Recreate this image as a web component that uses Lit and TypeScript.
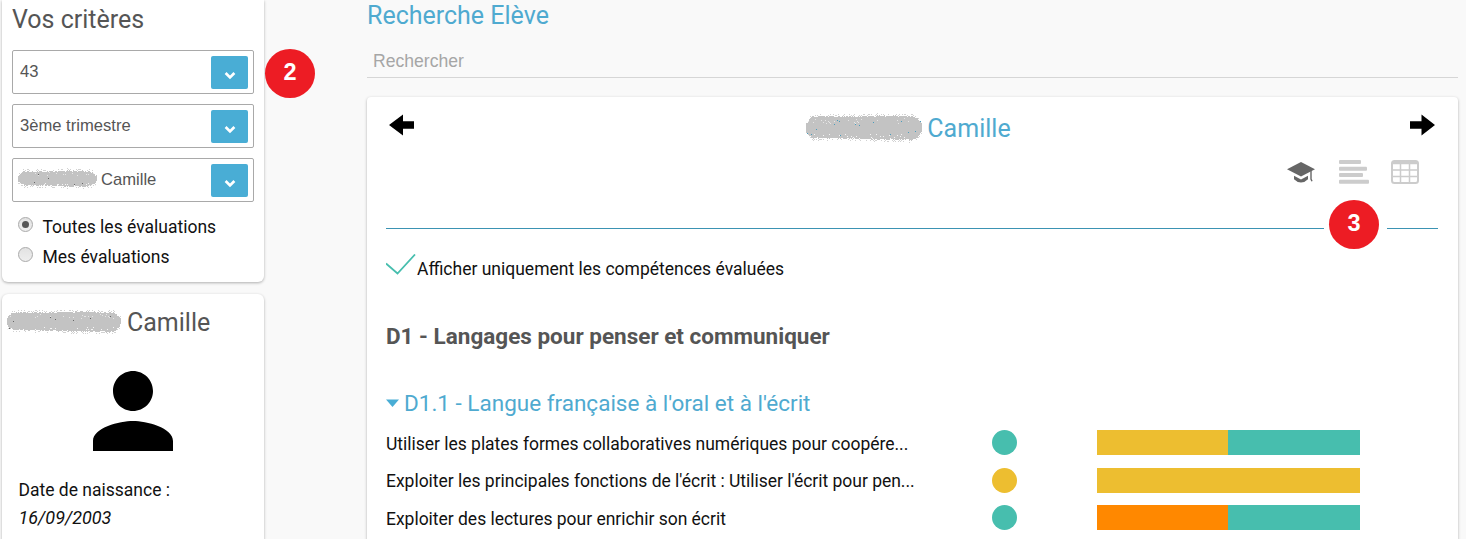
import { LitElement, html, css, svg } from "lit";
import { customElement, property } from "lit/decorators.js";

const TEAL = "#47beae";
const GOLD = "#edbe30";
const ORANGE = "#ff8800";

interface Skill {
  label: string;
  level: string;
  parts: { color: string; share: number }[];
}

const SKILLS: Skill[] = [
  {
    label: "Utiliser les plates formes collaboratives numériques pour coopére...",
    level: TEAL,
    parts: [{ color: GOLD, share: 49.8 }, { color: TEAL, share: 50.2 }],
  },
  {
    label: "Exploiter les principales fonctions de l'écrit : Utiliser l'écrit pour pen...",
    level: GOLD,
    parts: [{ color: GOLD, share: 100 }],
  },
  {
    label: "Exploiter des lectures pour enrichir son écrit",
    level: TEAL,
    parts: [{ color: ORANGE, share: 49.8 }, { color: TEAL, share: 50.2 }],
  },
];

// Grainy grey scribble that hides the family name.
@customElement("name-mask")
class NameMask extends LitElement {
  @property({ type: Number }) width = 80;
  @property({ type: Number }) height = 20;
  @property() ink = "#666";

  static styles = css`
    :host { display: block; flex: none; }
    svg { display: block; overflow: visible; }
  `;

  render() {
    const w = this.width;
    const h = this.height;
    let seed = w * 7 + h;
    const next = () => {
      seed = (seed * 16807) % 2147483647;
      return seed / 2147483647;
    };
    const dots: unknown[] = [];
    for (let x = 0; x < w; x += 1) {
      const endL = Math.max(0, 1 - x / 7);
      const endR = Math.max(0, 1 - (w - x) / 11);
      const wave = Math.sin((x / w) * 7) * 0.8;
      const top = 0.5 + wave * 0.5 + (endL * endL + endR * endR) * h * 0.3 + next() * 1.5;
      const bottom = h - 2.5 + (x / w) * 2.5 - (endL * endL * 0.2 + endR * endR * 0.4) * h - next() * 1.5;
      const y0 = Math.round(top);
      const y1 = Math.round(bottom);
      dots.push(svg`<rect x=${x} y=${y0} width="1" height=${Math.max(1, y1 - y0)} fill="#c3c3c3"/>`);
      if (next() > 0.65) dots.push(svg`<rect x=${x} y=${y0 - 2} width="1" height="1" fill="#d2d2d2"/>`);
      if (next() > 0.65) dots.push(svg`<rect x=${x} y=${y1 + 1} width="1" height="1" fill="#d2d2d2"/>`);
      if (next() > 0.78) dots.push(svg`<rect x=${x} y=${Math.round(h * 0.72 + next() * h * 0.16)} width="1" height="1" fill="#f6f6f6"/>`);
      if (next() > 0.85) dots.push(svg`<rect x=${x} y=${Math.round(h * 0.12 + next() * h * 0.2)} width="1" height="1" fill="#e6e6e6"/>`);
      if (next() > 0.91) dots.push(svg`<rect x=${x} y=${Math.round(h * 0.2 + next() * h * 0.6)} width="1" height="1" fill=${this.ink}/>`);
    }
    return html`<svg width=${w} height=${h} shape-rendering="crispEdges" aria-hidden="true">${dots}</svg>`;
  }
}

@customElement("criteria-select")
class CriteriaSelect extends LitElement {
  @property() value = "";
  @property({ type: Boolean }) masked = false;

  static styles = css`
    :host { display: block; }
    .box {
      box-sizing: border-box; height: 44px; border: 1px solid #a9a9a9; border-radius: 2px;
      display: flex; align-items: center; justify-content: space-between;
      padding: 0 5px 0 7px; background: #fff;
    }
    .masked { padding-left: 5px; }
    .value {
      display: flex; align-items: center; gap: 4px;
      font: 16.6px/20px "Liberation Sans", Arial, sans-serif; color: #555;
    }
    name-mask { margin-top: -3px; }
    .button {
      width: 37px; height: 33px; border-radius: 2px; background: #49add5;
      display: flex; align-items: center; justify-content: center;
    }
    .button svg { display: block; margin-top: 7px; }
  `;

  render() {
    return html`<div class="box ${this.masked ? "masked" : ""}">
      <div class="value">
        ${this.masked ? html`<name-mask width="79" height="18"></name-mask>` : ""}
        <span>${this.value}</span>
      </div>
      <div class="button">
        <svg width="12" height="9" viewBox="0 0 12 9"><path d="M1.600 2 6 6.400 10.400 2" fill="none" stroke="#fff" stroke-width="2.700"/></svg>
      </div>
    </div>`;
  }
}

@customElement("app-root")
class AppRoot extends LitElement {
  static styles = css`
    :host {
      display: block; position: relative; width: 1466px; height: 539px; overflow: hidden;
      background: #f9f9f9; font-family: Roboto, sans-serif; color: #111; white-space: nowrap;
    }
    .page { display: flex; gap: 103px; padding-left: 2px; height: 539px; }
    .side { width: 262px; flex: none; display: flex; flex-direction: column; gap: 12px; }
    .card { flex: none; background: #fff; border-radius: 6px; box-shadow: 0 1px 3px rgba(0, 0, 0, 0.3); box-sizing: border-box; }
    .criteria { height: 282px; padding: 0 10px; border-radius: 0 0 6px 6px; }
    .heading { font-size: 25px; line-height: 39px; color: #555; }
    .selects { display: flex; flex-direction: column; gap: 10px; margin-top: 11px; }
    .radios { margin: 10px 0 0 6px; }
    .radio { display: flex; align-items: center; gap: 9.5px; height: 30px; font-size: 17.5px; line-height: 30px; }
    .dial {
      box-sizing: border-box; width: 15px; height: 15px; margin-top: -5px; border: 1px solid #aaa; border-radius: 50%;
      background: linear-gradient(#e2e2e2, #eee); display: flex; align-items: center; justify-content: center;
    }
    .dial.on::after { content: ""; width: 7px; height: 7px; border-radius: 50%; background: #555; }
    .pupil { height: 250px; }
    .pupil-name { display: flex; align-items: center; gap: 6px; padding: 13px 0 0 5px; font-size: 25px; line-height: 30px; color: #555; height: 31px; margin-bottom: 13px; }
    .pupil-name name-mask { margin-top: -2px; }
    .avatar { display: block; margin: 0 auto; }
    .birth { padding: 5px 0 0 16.5px; font-size: 17.5px; line-height: 28px; }
    .date { font-style: italic; font-size: 18px; }

    .main { width: 1091px; flex: none; display: flex; flex-direction: column; }
    .title { font-size: 25px; line-height: 31px; color: #4faad0; }
    .search {
      box-sizing: border-box; height: 47px; padding: 14px 6px 0; border-bottom: 1px solid #d6d6d6;
      font: 17.6px/32px "Liberation Sans", Arial, sans-serif; color: #a6a6a6;
    }
    .report { margin-top: 19px; height: 460px; padding: 0 20px 0 19px; border-radius: 4px; }
    .nav { display: flex; align-items: flex-start; justify-content: space-between; height: 57px; padding: 0 3px 0 3px; }
    .nav svg { display: block; margin-top: 17px; }
    .who { display: flex; align-items: center; gap: 5px; font-size: 25px; line-height: 30px; color: #4faad0; padding: 17px 7px 0 0; }
    .who name-mask { margin-top: -2px; }
    .views { display: flex; justify-content: flex-end; align-items: center; height: 36px; padding-right: 18px; gap: 22px; }
    .views svg { display: block; }
    .views .cap { margin-right: 2px; }
    .rule { display: flex; gap: 63px; margin-top: 38px; }
    .rule-a, .rule-b { height: 1px; background: #3b93b3; }
    .rule-a { width: 938px; }
    .rule-b { width: 51px; }
    .only { display: flex; align-items: center; gap: 1px; height: 30px; margin-top: 25px; font-size: 17.5px; }
    .only svg { display: block; margin-top: -9px; }
    .domain { font-size: 22.5px; font-weight: 700; line-height: 30px; color: #555; margin-top: 37px; }
    .sub { display: flex; align-items: center; gap: 5px; margin-top: 37px; font-size: 22.5px; line-height: 30px; color: #4faad0; }
    .rows { margin-top: 6px; }
    .row { display: grid; grid-template-columns: 527px 183px 1px 263px; align-items: center; height: 37.5px; font-size: 17.5px; line-height: 30px; }
    .label { padding-top: 2px; letter-spacing: -0.02px; }
    .level { width: 25px; height: 25px; border-radius: 50%; justify-self: center; }
    .bar { grid-column: 4; display: flex; height: 25px; }

    .badge {
      position: absolute; width: 50px; height: 49px; border-radius: 50%; background: #ed1c24; color: #fff;
      font: bold 23.5px/47px "Liberation Sans", Arial, sans-serif; text-align: center;
    }
    .two { left: 265px; top: 49px; }
    .three { left: 1329px; top: 200px; }
  `;

  render() {
    return html`
      <div class="page">
        <aside class="side">
          <section class="card criteria">
            <div class="heading">Vos critères</div>
            <div class="selects">
              <criteria-select value="43"></criteria-select>
              <criteria-select value="3ème trimestre"></criteria-select>
              <criteria-select masked value="Camille"></criteria-select>
            </div>
            <div class="radios">
              <div class="radio"><span class="dial on"></span><span>Toutes les évaluations</span></div>
              <div class="radio"><span class="dial"></span><span>Mes évaluations</span></div>
            </div>
          </section>
          <section class="card pupil">
            <div class="pupil-name"><name-mask width="114" height="22"></name-mask><span class="first">Camille</span></div>
            <svg class="avatar" width="120" height="120" viewBox="0 0 24 24"><path d="M12 12c2.210 0 4-1.790 4-4s-1.790-4-4-4-4 1.790-4 4 1.790 4 4 4zm0 2c-2.670 0-8 1.340-8 4v2h16v-2c0-2.660-5.330-4-8-4z"/></svg>
            <div class="birth"><div class="born">Date de naissance :</div><div class="date">16/09/2003</div></div>
          </section>
        </aside>
        <main class="main">
          <div class="title">Recherche Elève</div>
          <div class="search">Rechercher</div>
          <section class="card report">
            <div class="nav">
              <svg width="25" height="22" viewBox="0 0 25 22"><path d="M0 11 14 .5V7.300H25V14.700H14V21.500z"/></svg>
              <div class="who"><name-mask width="116" height="26" ink="#4a9dbd"></name-mask><span>Camille</span></div>
              <svg width="25" height="22" viewBox="0 0 25 22"><path d="M25 11 11.500 .5V7.300H0V14.700H11.500V21.500z"/></svg>
            </div>
            <div class="views">
              <svg class="cap" width="28" height="22" viewBox="0 0 28 22" fill="#666"><path d="M7 13.300 14 17l7-3.700v5Q18 21.500 14 21.500T7 18.300z"/><path d="M7 13.500 14 17.200 21 13.500" fill="none" stroke="#fff" stroke-width="2.200"/><path d="M14 1 28 8.300 14 15.500 0 8.300z"/><path d="M24 9.500V18l1 2.300" fill="none" stroke="#666" stroke-width="1.400"/></svg>
              <svg width="30" height="24" viewBox="0 0 30 24" fill="#ccc"><rect width="22" height="4" rx="1"/><rect y="6.700" width="28" height="4" rx="1"/><rect y="13" width="24" height="4" rx="1"/><rect y="19.700" width="30" height="4" rx="1"/></svg>
              <svg width="29" height="24" viewBox="0 0 29 24" fill="none" stroke="#ccc"><rect x="1" y="1" width="26" height="22" rx="2.500" stroke-width="2"/><path d="M1 3h26" stroke-width="2.500"/><path d="M1 10h26M1 16.500h26M9.500 3v20M18.500 3v20" stroke-width="1.500"/></svg>
            </div>
            <div class="rule"><span class="rule-a"></span><span class="rule-b"></span></div>
            <div class="only">
              <svg width="30" height="21" viewBox="0 0 30 21"><path d="M0 9.500 11.500 19.500 29 .5" fill="none" stroke="#47beae" stroke-width="1.800"/></svg>
              <span>Afficher uniquement les compétences évaluées</span>
            </div>
            <div class="domain"><span>D1 - Langages pour penser et communiquer</span></div>
            <div class="sub">
              <svg width="13" height="8" viewBox="0 0 13 8"><path d="M0 .5h13L6.500 8z" fill="#49add5"/></svg>
              <span>D1.1 - Langue française à l'oral et à l'écrit</span>
            </div>
            <div class="rows">
              ${SKILLS.map(
                (s) => html`<div class="row">
                  <span class="label">${s.label}</span>
                  <span class="level" style="background:${s.level}"></span>
                  <div class="bar">
                    ${s.parts.map((p) => html`<span style="width:${p.share}%;background:${p.color}"></span>`)}
                  </div>
                </div>`
              )}
            </div>
          </section>
        </main>
      </div>
      <div class="badge two">2</div>
      <div class="badge three">3</div>
    `;
  }
}
